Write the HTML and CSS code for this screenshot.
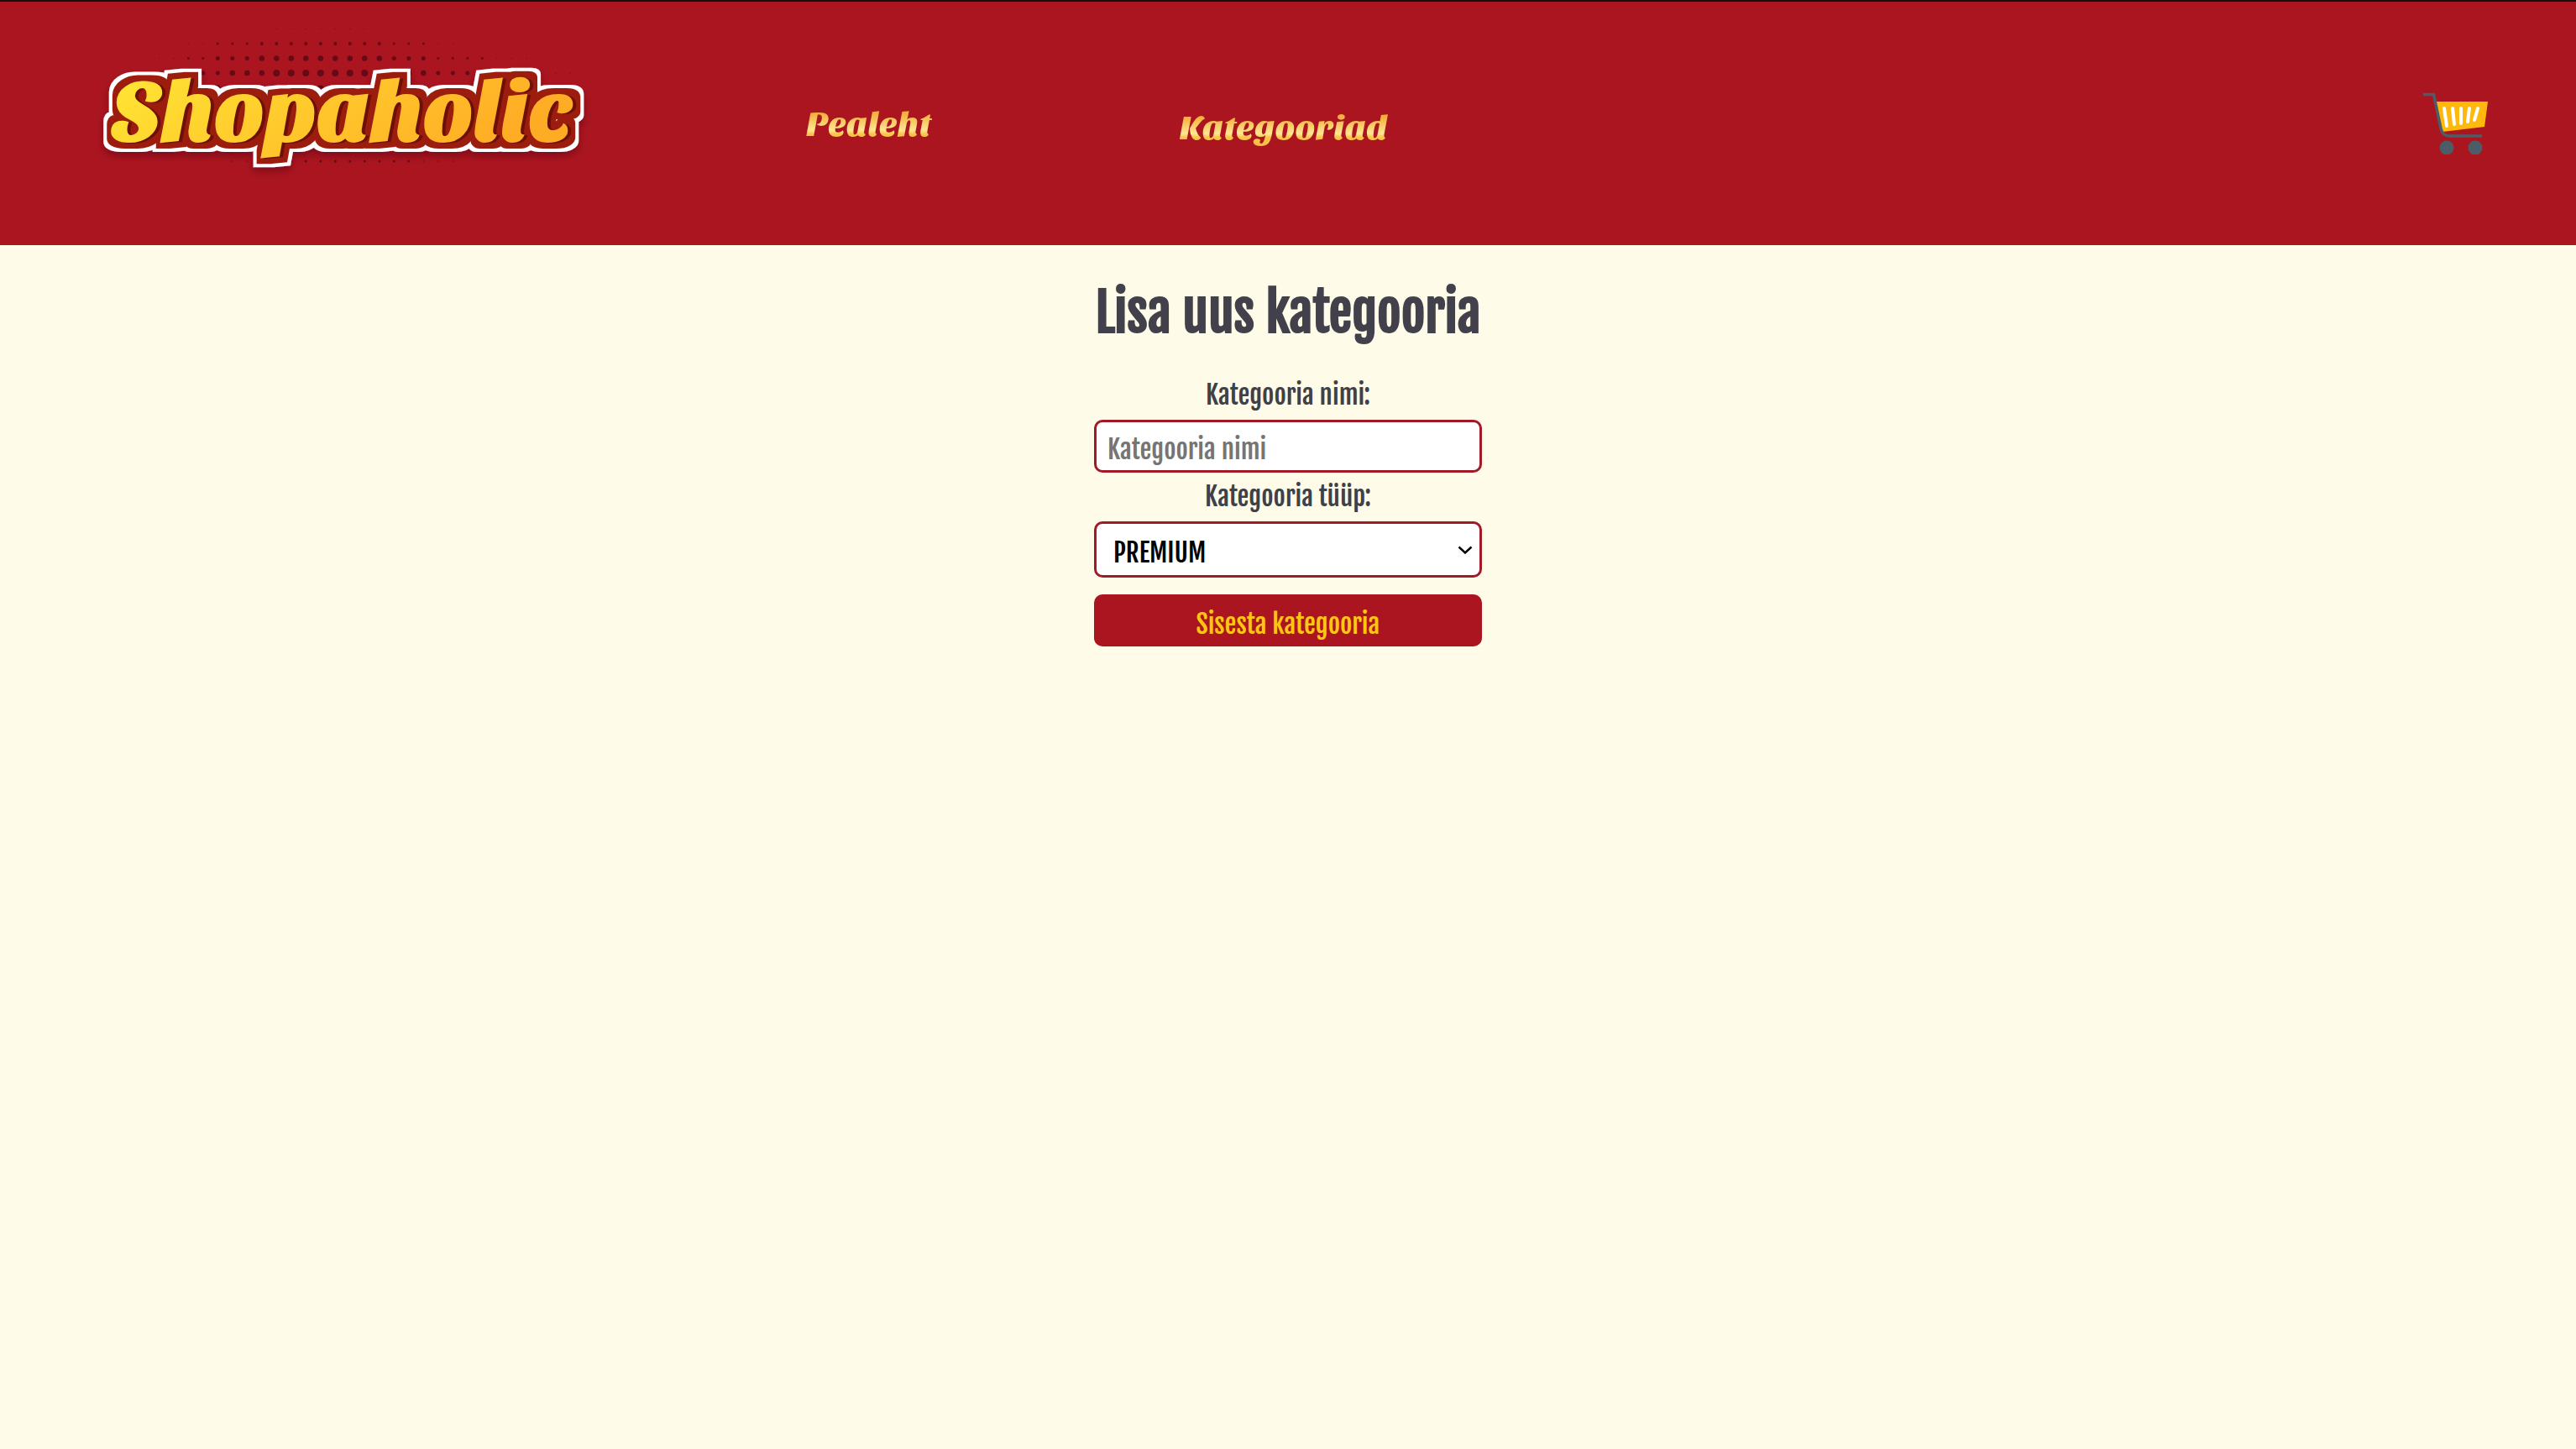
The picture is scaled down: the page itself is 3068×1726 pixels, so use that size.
FILE: index.html
```html
<!DOCTYPE html>
<html lang="et">
<head>
<meta charset="utf-8">
<title>Shopaholic</title>
<link rel="stylesheet" href="styles.css">
</head>
<body>
<header class="header">
  <a class="logo" href="#" aria-label="Shopaholic">
    <svg class="logo-art" viewBox="100 30 620 190">
      <defs>
        <linearGradient id="gold" x1="0" y1="0" x2="1" y2="0.3">
          <stop offset="0" stop-color="#ffe834"/>
          <stop offset="1" stop-color="#ffac25"/>
        </linearGradient>
        <filter id="edge" filterUnits="userSpaceOnUse" x="100" y="30" width="620" height="190">
          <feMorphology operator="dilate" radius="12"/>
          <feDropShadow dx="0" dy="5" stdDeviation="4" flood-color="#5a0010" flood-opacity="0.5"/>
        </filter>
        <filter id="rim" filterUnits="userSpaceOnUse" x="100" y="30" width="620" height="190">
          <feMorphology operator="dilate" radius="8"/>
        </filter>
      </defs>
      <g class="dots">
        <path d="M329.300 34.500H434.400" stroke-width="1"/>
        <path d="M224.300 52H539.400" stroke-width="1.200"/>
        <path d="M259.300 52H504.400" stroke-width="2.800"/>
        <path d="M311.800 52H451.900" stroke-width="4"/>
        <path d="M189.300 69.500H626.900" stroke-width="1.200"/>
        <path d="M224.300 69.500H574.400" stroke-width="2.800"/>
        <path d="M259.300 69.500H504.400" stroke-width="5"/>
        <path d="M311.800 69.500H451.900" stroke-width="6.500"/>
        <path d="M206.800 87H679.400" stroke-width="1.200"/>
        <path d="M241.800 87H556.900" stroke-width="5"/>
        <path d="M276.800 87H504.400" stroke-width="6.500"/>
        <path d="M329.300 87H434.400" stroke-width="8"/>
        <path d="M241.800 104.500H521.900" stroke-width="6.500"/>
        <path d="M276.800 192H539.400" stroke-width="1.500"/>
        <path d="M329.300 192H486.900" stroke-width="3"/>
      </g>
      <g class="logo-word">
        <text class="logo-edge" x="135" y="167" filter="url(#edge)">Shopaholic</text>
        <text class="logo-rim" x="135" y="167" filter="url(#rim)">Shopaholic</text>
        <text class="logo-depth" x="137" y="168">Shopaholic</text>
        <text class="logo-face" x="133" y="167">Shopaholic</text>
      </g>
    </svg>
  </a>
  <nav class="nav">
    <a class="nav-link" href="#">Pealeht</a>
    <a class="nav-link nav-link-low" href="#">Kategooriad</a>
  </nav>
  <a class="cart" href="#" aria-label="Ostukorv">
    <svg class="cart-art" viewBox="0 0 78 74">
      <path d="M15 11H77L73 41L23 47Z" fill="#ffb90c"/>
      <path d="M25 19L28 40M35 19L37 38M45 19V37M55 19L53 35M65 19L61 33" stroke="#fff" stroke-width="4" stroke-linecap="round"/>
      <path d="M0 2.500H12.500L21 43Q23 52 31 52H70" fill="none" stroke="#4d5d68" stroke-width="3.600"/>
      <circle cx="28" cy="66" r="8.500" fill="#4d5d68"/>
      <circle cx="62" cy="66" r="8.500" fill="#4d5d68"/>
    </svg>
  </a>
</header>
<main class="main">
  <form class="form">
    <h1 class="title">Lisa uus kategooria</h1>
    <label class="label" for="name">Kategooria nimi:</label>
    <input class="field" id="name" type="text" placeholder="Kategooria nimi">
    <label class="label" for="type">Kategooria tüüp:</label>
    <div class="select-wrap">
      <select class="field select" id="type"><option>PREMIUM</option></select>
      <svg class="chevron" viewBox="0 0 18 10"><path d="M1.500 1.500L9 8.500L16.500 1.500" fill="none" stroke="#000" stroke-width="2.400"/></svg>
    </div>
    <button class="submit" type="button">Sisesta kategooria</button>
  </form>
</main>
</body>
</html>
```
FILE: styles.css
```css
* { box-sizing: border-box; }

body {
  margin: 0;
  min-height: 100vh;
  background: #fffbe9;
  color: #3e4147;
  font-family: "Fjalla One", "Liberation Sans Narrow", "Liberation Sans", sans-serif;
}

.header {
  display: flex;
  align-items: flex-start;
  min-height: 292px;
  padding: 28px 104px 0 100px;
  background: #aa1520;
  border-top: 2px solid #15100f;
}

.logo-art { display: block; width: 620px; height: 190px; }
.dots { fill: none; stroke: #650a17; stroke-linecap: round; stroke-dasharray: 0 17.5; }
.logo-word { font: 400 101px "Sansita One", Lato, sans-serif; }
.logo-edge { fill: #fff; }
.logo-rim { fill: #9c1d10; }
.logo-depth { fill: #6d1008; stroke: #6d1008; stroke-width: 2px; }
.logo-face { fill: url(#gold); stroke: url(#gold); stroke-width: 2px; }

.nav {
  display: flex;
  flex: 1;
  gap: 295px;
  margin-left: 240px;
  padding-top: 95px;
}

.nav-link {
  height: 54px;
  font: 400 41px/48px "Sansita One", Lato, sans-serif;
  color: transparent;
  background: linear-gradient(#f3b13c 20%, #ffe693 56%, #fbc54a 64%, #f5b63c);
  background-clip: text;
  -webkit-background-clip: text;
  text-decoration: none;
}
.nav-link-low { margin-top: 4px; }

.cart { padding-top: 80px; }
.cart-art { display: block; width: 78px; height: 74px; }

.main { display: flex; justify-content: center; }

.form {
  display: flex;
  flex-direction: column;
  width: 462px;
  padding-top: 36px;
}

.title {
  margin: 0 0 26px;
  color: #42404b;
  font-size: 62px;
  line-height: 88px;
  text-align: center;
  white-space: nowrap;
}

.label {
  height: 58px;
  padding-top: 5px;
  font-size: 31px;
  line-height: 48px;
  text-align: center;
}

.field {
  width: 100%;
  height: 63px;
  padding: 8px 13px 0;
  border: 3px solid #a01a28;
  border-radius: 10px;
  background: #fff;
  color: #000;
  font-family: inherit;
  font-size: 31px;
}
.field::placeholder { color: #757575; }

.select-wrap { position: relative; height: 67px; }
.select { height: 67px; padding: 8px 20px 0; appearance: none; }
.chevron {
  position: absolute;
  top: 29px;
  right: 11px;
  width: 18px;
  height: 10px;
  pointer-events: none;
}

.submit {
  height: 62px;
  margin-top: 20px;
  padding: 8px 0 0;
  border: 0;
  border-radius: 10px;
  background: #aa1520;
  color: #ffc414;
  font-family: inherit;
  font-size: 31px;
}
```
